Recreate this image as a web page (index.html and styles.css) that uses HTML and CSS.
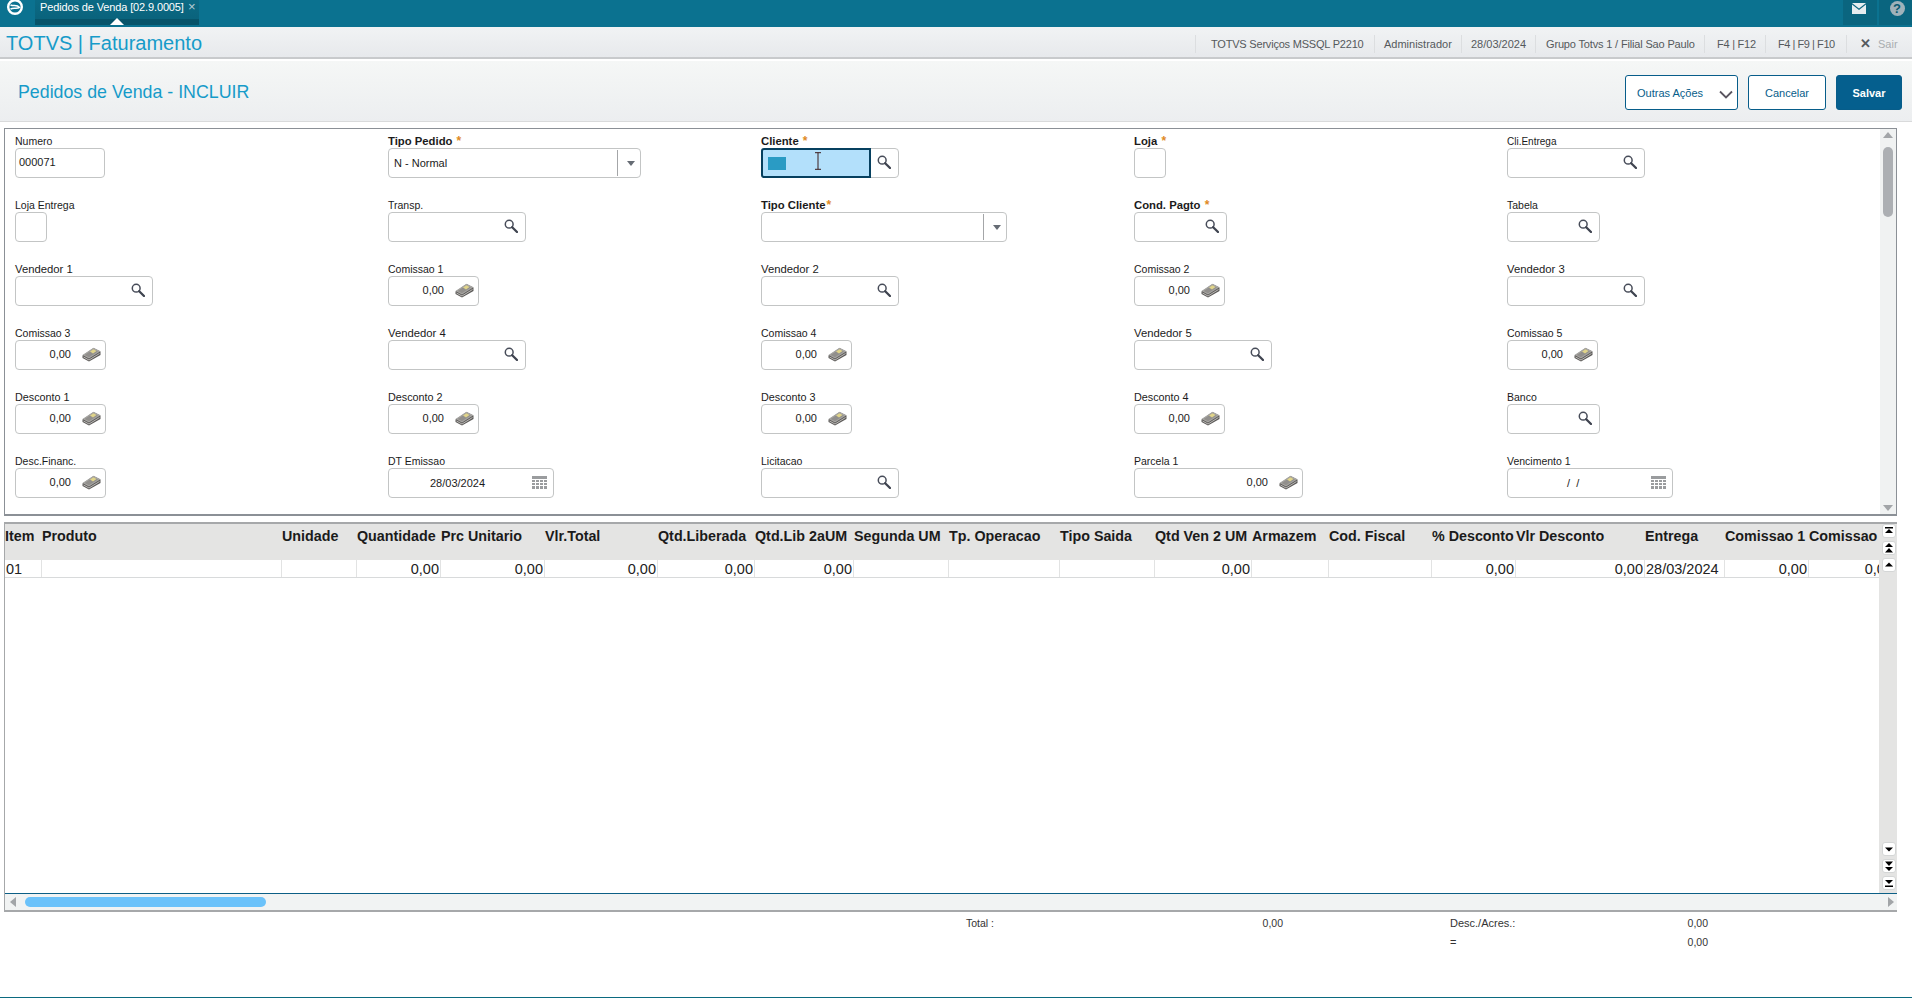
FILE: index.html
```html
<!DOCTYPE html>
<html lang="pt-BR">
<head>
<meta charset="utf-8">
<title>Pedidos de Venda</title>
<link rel="stylesheet" href="styles.css">
</head>
<body>
<svg class="defs" xmlns="http://www.w3.org/2000/svg">
  <symbol id="search" viewBox="0 0 14 14"><circle cx="5.2" cy="5.2" r="3.9" fill="#fff" stroke="#474c59" stroke-width="1.5"/><path d="M8.2 8.2 13 13" stroke="#3f4450" stroke-width="2.300" stroke-linecap="round"/></symbol>
  <symbol id="money" viewBox="0 0 19 15"><path d="M.5 8.500 11.500 1l7 3.500V8L7 14.500.5 11z" fill="#5c5a58"/><path d="M.5 8 11.500 .8l7 3.500L7 11.500z" fill="#a8a7a4"/><path d="M2.500 8 11.500 2.200l4.500 2.300L7 10.200z" fill="#918f8c"/><path d="M8 4.500 11.500 2.200l3 1.800L11 6.500z" fill="#e0d48a"/><path d="M1.500 10 7 13 17.500 6.500" fill="none" stroke="#d4d3d0" stroke-width=".8"/></symbol>
  <symbol id="cal" viewBox="0 0 15 14"><path d="M0 0h15v3H0zM0 4h3v2H0zM4 4h3v2H4zM8 4h3v2H8zM12 4h3v2h-3zM0 7h3v2H0zM4 7h3v2H4zM8 7h3v2H8zM12 7h3v2h-3zM0 10h3v3H0zM4 10h3v3H4zM8 10h3v3H8zM12 10h3v3h-3z" fill="#9a9c9e"/></symbol>
</svg>

<header class="topbar">
  <svg class="logo" viewBox="0 0 18 18"><circle cx="9" cy="9" r="6.800" fill="none" stroke="#fff" stroke-width="2.400"/><path d="M4.500 6.800c2.500 1.800 6.500-.6 9 2.600-2.500 2-6.200-.4-9 1.800" fill="none" stroke="#fff" stroke-width="1.500"/></svg>
  <div class="tab">
    <span class="tab-text">Pedidos de Venda [02.9.0005]</span>
    <span class="tab-close">×</span>
    <i class="tab-arrow"></i>
  </div>
  <div class="top-icons">
    <div class="top-ic"><svg viewBox="0 0 14 11" class="mail"><path d="M0 0h14L7 5.500z" fill="#e6edf0"/><path d="M0 1.500 7 7l7-5.500V11H0z" fill="#e6edf0"/></svg></div>
    <div class="top-ic help-ic"><span class="help">?</span></div>
  </div>
</header>

<div class="appbar">
  <div class="brand">TOTVS | Faturamento</div>
  <ul class="status">
    <li class="s1">TOTVS Serviços MSSQL P2210</li>
    <li class="s2">Administrador</li>
    <li class="s3">28/03/2024</li>
    <li class="s4">Grupo Totvs 1 / Filial Sao Paulo</li>
    <li class="s5">F4 | F12</li>
    <li class="s6">F4 | F9 | F10</li>
    <li class="s7"><b>✕</b><span>Sair</span></li>
  </ul>
</div>

<div class="pagehead">
  <h1>Pedidos de Venda - INCLUIR</h1>
  <div class="actions">
    <button class="btn other">Outras Ações<svg viewBox="0 0 14 9"><path d="M1 1.500 7 7.500l6-6" fill="none" stroke="#5a5560" stroke-width="1.800"/></svg></button>
    <button class="btn cancel">Cancelar</button>
    <button class="btn save">Salvar</button>
  </div>
</div>

<section class="formpanel">
  <div class="fields">
    <div class="field"><label>Numero</label><div class="box w90"><span class="val">000071</span></div></div>
    <div class="field"><label class="req">Tipo Pedido <em>*</em></label><div class="box w253"><span class="val sel">N - Normal</span><span class="drop"><i></i></span></div></div>
    <div class="field"><label class="req">Cliente <em>*</em></label><div class="box w138 focus"><div class="focused"><i class="selblock"></i><svg class="ibeam" viewBox="0 0 8 18"><path d="M1 .7h6M1 17.300h6M4 .7v16.600" fill="none" stroke="#3a1c1c" stroke-width="1"/></svg></div><svg class="ic-s"><use href="#search"/></svg></div></div>
    <div class="field"><label class="req">Loja <em>*</em></label><div class="box w32"></div></div>
    <div class="field"><label class="narrow">Cli.Entrega</label><div class="box w138"><svg class="ic-s"><use href="#search"/></svg></div></div>

    <div class="field"><label>Loja Entrega</label><div class="box w32"></div></div>
    <div class="field"><label>Transp.</label><div class="box w138"><svg class="ic-s"><use href="#search"/></svg></div></div>
    <div class="field"><label class="req">Tipo Cliente<em>*</em></label><div class="box w246"><span class="drop"><i></i></span></div></div>
    <div class="field"><label class="req">Cond. Pagto <em>*</em></label><div class="box w93"><svg class="ic-s"><use href="#search"/></svg></div></div>
    <div class="field"><label>Tabela</label><div class="box w93"><svg class="ic-s"><use href="#search"/></svg></div></div>

    <div class="field"><label class="wide">Vendedor 1</label><div class="box w138"><svg class="ic-s"><use href="#search"/></svg></div></div>
    <div class="field"><label>Comissao 1</label><div class="box w91"><span class="num">0,00</span><svg class="ic-m"><use href="#money"/></svg></div></div>
    <div class="field"><label class="wide">Vendedor 2</label><div class="box w138"><svg class="ic-s"><use href="#search"/></svg></div></div>
    <div class="field"><label>Comissao 2</label><div class="box w91"><span class="num">0,00</span><svg class="ic-m"><use href="#money"/></svg></div></div>
    <div class="field"><label class="wide">Vendedor 3</label><div class="box w138"><svg class="ic-s"><use href="#search"/></svg></div></div>

    <div class="field"><label>Comissao 3</label><div class="box w91"><span class="num">0,00</span><svg class="ic-m"><use href="#money"/></svg></div></div>
    <div class="field"><label class="wide">Vendedor 4</label><div class="box w138"><svg class="ic-s"><use href="#search"/></svg></div></div>
    <div class="field"><label>Comissao 4</label><div class="box w91"><span class="num">0,00</span><svg class="ic-m"><use href="#money"/></svg></div></div>
    <div class="field"><label class="wide">Vendedor 5</label><div class="box w138"><svg class="ic-s"><use href="#search"/></svg></div></div>
    <div class="field"><label>Comissao 5</label><div class="box w91"><span class="num">0,00</span><svg class="ic-m"><use href="#money"/></svg></div></div>

    <div class="field"><label class="mid">Desconto 1</label><div class="box w91"><span class="num">0,00</span><svg class="ic-m"><use href="#money"/></svg></div></div>
    <div class="field"><label class="mid">Desconto 2</label><div class="box w91"><span class="num">0,00</span><svg class="ic-m"><use href="#money"/></svg></div></div>
    <div class="field"><label class="mid">Desconto 3</label><div class="box w91"><span class="num">0,00</span><svg class="ic-m"><use href="#money"/></svg></div></div>
    <div class="field"><label class="mid">Desconto 4</label><div class="box w91"><span class="num">0,00</span><svg class="ic-m"><use href="#money"/></svg></div></div>
    <div class="field"><label>Banco</label><div class="box w93"><svg class="ic-s"><use href="#search"/></svg></div></div>

    <div class="field"><label>Desc.Financ.</label><div class="box w91"><span class="num">0,00</span><svg class="ic-m"><use href="#money"/></svg></div></div>
    <div class="field"><label>DT Emissao</label><div class="box w166"><span class="date">28/03/2024</span><svg class="ic-c"><use href="#cal"/></svg></div></div>
    <div class="field"><label>Licitacao</label><div class="box w138"><svg class="ic-s"><use href="#search"/></svg></div></div>
    <div class="field"><label>Parcela 1</label><div class="box w169"><span class="num">0,00</span><svg class="ic-m"><use href="#money"/></svg></div></div>
    <div class="field"><label>Vencimento 1</label><div class="box w166"><span class="date blank">/&nbsp;&nbsp;/</span><svg class="ic-c"><use href="#cal"/></svg></div></div>
  </div>
  <div class="vscroll">
    <i class="arrow up"></i>
    <div class="vthumb"></div>
    <i class="arrow down"></i>
  </div>
</section>

<section class="gridpanel">
  <div class="gridmain">
    <div class="gridclip">
      <div class="grow ghead">
        <div>Item</div><div>Produto</div><div>Unidade</div><div>Quantidade</div><div>Prc Unitario</div><div>Vlr.Total</div><div>Qtd.Liberada</div><div>Qtd.Lib 2aUM</div><div>Segunda UM</div><div>Tp. Operacao</div><div>Tipo Saida</div><div>Qtd Ven 2 UM</div><div>Armazem</div><div>Cod. Fiscal</div><div>% Desconto</div><div>Vlr Desconto</div><div>Entrega</div><div>Comissao 1</div><div>Comissao 2</div>
      </div>
      <div class="grow gdata">
        <div>01</div><div></div><div></div><div class="r">0,00</div><div class="r">0,00</div><div class="r">0,00</div><div class="r">0,00</div><div class="r">0,00</div><div></div><div></div><div></div><div class="r">0,00</div><div></div><div></div><div class="r">0,00</div><div class="r">0,00</div><div>28/03/2024</div><div class="r">0,00</div><div class="r">0,00</div>
      </div>
    </div>
    <div class="gridside">
      <div class="navgroup">
        <span class="nav"><svg viewBox="0 0 12 12"><path d="M2 2h8v1.500H2zM6 4l4 4H2z"/></svg></span>
        <span class="nav"><svg viewBox="0 0 12 12"><path d="M6 1l4 4H2zM6 6l4 4.500H2z"/></svg></span>
        <span class="nav"><svg viewBox="0 0 12 12"><path d="M6 3.500l4 4H2z"/></svg></span>
      </div>
      <div class="navgroup">
        <span class="nav"><svg viewBox="0 0 12 12"><path d="M2 4.500h8l-4 4z"/></svg></span>
        <span class="nav"><svg viewBox="0 0 12 12"><path d="M2 1.500h8l-4 4.500zM2 7h8l-4 4z"/></svg></span>
        <span class="nav"><svg viewBox="0 0 12 12"><path d="M2 3h8l-4 4zM2 8.500h8V10H2z"/></svg></span>
      </div>
    </div>
  </div>
  <div class="hscroll">
    <i class="arrow left"></i>
    <div class="hthumb"></div>
    <i class="arrow right"></i>
  </div>
</section>

<footer class="totals">
  <div class="tline"><span class="tl1">Total :</span><span class="tv1">0,00</span><span class="tl2">Desc./Acres.:</span><span class="tv2">0,00</span></div>
  <div class="tline"><span class="tl1"></span><span class="tv1"></span><span class="tl2">=</span><span class="tv2">0,00</span></div>
</footer>
</body>
</html>
```
FILE: styles.css
```css
* { box-sizing: border-box; }
html, body { margin: 0; padding: 0; }
body {
  width: 1912px;
  height: 998px;
  overflow: hidden;
  background: #fff;
  display: flex;
  flex-direction: column;
  font-family: "Liberation Sans", Arial, sans-serif;
  font-size: 11px;
  color: #1b1b1b;
  border-bottom: 1px solid #0b6a80;
}
.defs { display: none; }

/* top bar */
.topbar {
  height: 27px;
  flex: none;
  background: #0b7290;
  display: flex;
  align-items: flex-start;
  overflow: hidden;
}
.logo { width: 18px; height: 18px; margin: -2px 0 0 6px; flex: none; }
.tab {
  position: relative;
  width: 164px;
  height: 25px;
  margin-left: 11px;
  background: linear-gradient(#0b6a85 0, #0a637c 19px, #07546a 19px);
  color: #fff;
  padding: 1px 0 0 5px;
  line-height: 13px;
  white-space: nowrap;
  letter-spacing: -.13px;
}
.tab-close { position: absolute; left: 153px; top: 0; font-size: 13px; color: #b5cdd6; }
.tab-arrow {
  position: absolute;
  left: 75px;
  bottom: 0;
  border: 7px solid transparent;
  border-top: 0;
  border-bottom: 7px solid #fff;
}
.top-icons { margin-left: auto; display: flex; gap: 2px; }
.top-ic {
  width: 34px;
  height: 25px;
  background: #0a657f;
  display: flex;
  justify-content: center;
  padding-top: 3px;
}
.help-ic { padding-top: 1px; padding-left: 3px; width: 33px; }
.mail { width: 14px; height: 11px; margin-left: -2px; }
.help {
  width: 15px;
  height: 15px;
  border-radius: 50%;
  background: #9fb2ba;
  color: #0a5a70;
  font-weight: 700;
  font-size: 13px;
  line-height: 15px;
  text-align: center;
}

/* app bar */
.appbar {
  height: 32px;
  flex: none;
  background: linear-gradient(#f1f3f4, #e7e9ec);
  border-bottom: 2px solid #c8cacc;
  display: flex;
  align-items: center;
  justify-content: space-between;
  padding-left: 6px;
}
.brand { font-size: 20px; color: #169bc9; line-height: 24px; margin-top: 1px; }
.status { list-style: none; margin: 4px 15px 0 0; padding: 0; display: flex; color: #55595c; height: 18px; line-height: 18px; white-space: nowrap; }
.status li { border-left: 1px solid #dcdee0; padding-left: 15px; }
.status .s1 { width: 179px; letter-spacing: -.2px; }
.status .s2 { width: 87px; padding-left: 9px; }
.status .s3 { width: 74px; padding-left: 9px; }
.status .s4 { width: 169px; padding-left: 10px; letter-spacing: -.16px; }
.status .s5 { width: 61px; padding-left: 12px; letter-spacing: -.25px; }
.status .s6 { width: 81px; padding-left: 12px; letter-spacing: -.45px; }
.status .s7 { width: 51px; padding-left: 13px; }
.status .s7 b { color: #555a5e; font-size: 13px; margin-right: 7px; }
.status .s7 span { color: #a9adb0; }

/* page header */
.pagehead {
  height: 61px;
  flex: none;
  margin-top: 2px;
  background: linear-gradient(#f5f7f6, #eceef0);
  border-bottom: 1px solid #d9dadb;
  display: flex;
  align-items: center;
  justify-content: space-between;
  padding: 0 10px 0 18px;
}
.pagehead h1 { margin: 3px 0 0; font-size: 17.800px; font-weight: 400; color: #169bc9; }
.actions { display: flex; gap: 10px; margin-top: 3px; }
.btn {
  height: 35px;
  border-radius: 3px;
  border: 1px solid #075d8a;
  background: #fff;
  color: #075d8a;
  font: 11px "Liberation Sans", Arial, sans-serif;
  padding: 0;
}
.other { width: 113px; display: flex; align-items: center; justify-content: space-between; padding: 0 4px 0 11px; }
.other svg { width: 14px; height: 9px; margin-top: 3px; }
.cancel { width: 78px; }
.save { width: 66px; background: #055f8e; color: #fff; font-weight: 700; }

/* form panel */
.formpanel {
  height: 388px;
  flex: none;
  margin: 6px 15px 0 4px;
  border: 1px solid #8b9096;
  border-bottom-width: 2px;
  display: flex;
  overflow: hidden;
}
.fields {
  flex: 1;
  display: grid;
  grid-template-columns: repeat(5, 373px);
  grid-auto-rows: 64px;
  padding: 5px 0 0 10px;
}
.field { display: flex; flex-direction: column; }
.field label { height: 14px; line-height: 15px; font-size: 10.500px; white-space: nowrap; }
.field label.narrow { font-size: 10px; }
.field label.mid { font-size: 10.800px; }
.field label.wide { font-size: 11.300px; }
.field label.req { font-size: 11.300px; font-weight: 700; line-height: 14px; }
.field label em { color: #e08a1e; font-style: normal; font-weight: 700; font-size: 12px; margin-left: 1px; }
.box {
  height: 30px;
  border: 1px solid #c3c5c5;
  border-radius: 4px;
  background: #fff;
  display: flex;
  align-items: center;
  position: relative;
  padding-right: 7px;
}
.w32 { width: 32px; }
.w90 { width: 90px; }
.w91 { width: 91px; }
.w93 { width: 93px; }
.w138 { width: 138px; }
.w166 { width: 166px; }
.w169 { width: 169px; }
.w246 { width: 246px; }
.w253 { width: 253px; }
.val { padding-left: 3px; font-size: 11px; margin-top: -2px; }
.val.sel { padding-left: 5px; margin-top: 0; }
.num { margin-left: auto; margin-right: 27px; font-size: 11px; margin-top: -2px; }
.box .num + svg { position: absolute; right: 4px; top: 6px; }
.date { position: absolute; left: 41px; font-size: 11px; margin-top: -1px; }
.date.blank { left: 59px; }
.ic-s { width: 14px; height: 14px; margin-left: auto; margin-top: -2px; }
.ic-m { width: 19px; height: 15px; }
.ic-c { width: 15px; height: 14px; margin-left: auto; margin-right: -1px; }
.drop {
  position: absolute;
  right: 0;
  top: 1px;
  bottom: 1px;
  width: 23px;
  border-left: 1px solid #a4a6a8;
  display: flex;
  align-items: center;
  justify-content: center;
}
.drop i {
  border: 4px solid transparent;
  border-bottom: 0;
  border-top: 5px solid #666c74;
  margin-left: 3px;
}
.focus { overflow: visible; }
.focused {
  position: absolute;
  left: -1px;
  top: -1px;
  width: 110px;
  height: 30px;
  background: #b3e0fb;
  border: 2px solid #06405f;
  border-radius: 3px 0 0 3px;
}
.selblock { position: absolute; left: 5px; top: 7px; width: 18px; height: 13px; background: #2a9bc4; }
.ibeam { position: absolute; left: 51px; top: 2px; width: 8px; height: 18px; }

.vscroll {
  width: 16px;
  flex: none;
  background: #f0f2f2;
  position: relative;
}
.vthumb {
  position: absolute;
  left: 3px;
  top: 18px;
  width: 10px;
  height: 70px;
  background: #acafb3;
  border-radius: 5px;
}
.arrow { position: absolute; width: 0; height: 0; border: 5px solid transparent; }
.arrow.up { left: 3px; top: 3px; border-top: 0; border-bottom: 6px solid #a2a5a8; }
.arrow.down { left: 3px; bottom: 3px; border-bottom: 0; border-top: 6px solid #a2a5a8; }
.arrow.left { left: 5px; top: 3px; border-left: 0; border-right: 6px solid #a2a5a8; }
.arrow.right { right: 3px; top: 3px; border-right: 0; border-left: 6px solid #a2a5a8; }

/* grid panel */
.gridpanel {
  height: 390px;
  flex: none;
  margin: 6px 15px 0 4px;
  border: 1px solid #a6a8aa;
  border-top-width: 2px;
  border-right: 0;
  border-bottom-width: 2px;
  display: flex;
  flex-direction: column;
}
.gridmain { flex: 1; display: flex; min-height: 0; }
.gridclip { width: 1874px; overflow: hidden; flex: none; }
.grow {
  display: grid;
  grid-template-columns: 37px 240px 75px 84px 104px 113px 97px 99px 95px 111px 95px 97px 77px 103px 84px 129px 80px 84px 86px;
  width: 1910px;
}
.ghead {
  height: 36px;
  background: #e4e4e3;
  font-size: 14.300px;
  font-weight: 700;
  line-height: 17px;
  padding-top: 4px;
  color: #1b1b1b;
  white-space: nowrap;
}
.ghead > div { padding-left: 0; }
.gdata {
  height: 18px;
  font-size: 14.500px;
  line-height: 16px;
  border-bottom: 1px solid #d8dadb;
  background: #fff;
  color: #222;
}
.gdata > div { border-right: 1px solid #e2e3e3; padding: 1px 1px 0 1px; white-space: nowrap; overflow: hidden; }
.gdata > .r { text-align: right; }
.gridside {
  width: 18px;
  flex: none;
  background: #e4e4e3;
  display: flex;
  flex-direction: column;
  justify-content: space-between;
  padding: 0 1px 3px 3px;
}
.navgroup { display: flex; flex-direction: column; gap: 3px; }
.nav {
  width: 14px;
  height: 14px;
  background: #fff;
  border: 1px solid #d4d6d6;
  border-radius: 3px;
  display: block;
}
.nav svg { display: block; width: 12px; height: 12px; }
.hscroll {
  height: 17px;
  flex: none;
  position: relative;
  background: #f1f3f3;
  border-top: 1px solid #0c5f86;
}
.hthumb {
  position: absolute;
  left: 20px;
  top: 3px;
  width: 241px;
  height: 10px;
  background: #6bc2fa;
  border-radius: 5px;
}

/* totals */
.totals { padding-top: 1px; font-size: 10.500px; color: #333; }
.tline { height: 19.500px; display: flex; align-items: center; white-space: nowrap; }
.tl1 { margin-left: 966px; width: 50px; }
.tv1 { width: 267px; text-align: right; }
.tl2 { margin-left: 167px; width: 80px; font-size: 11px; }
.tv2 { width: 178px; text-align: right; }
```
